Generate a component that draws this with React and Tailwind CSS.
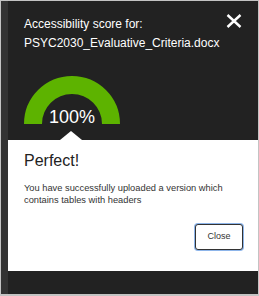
export default function App() {
  return (
    <div className="w-[259px] h-[296px] bg-[#c3c3c3] pt-[1px] pl-[1px] pr-[1px] pb-[2px] font-['Liberation_Sans',Arial,sans-serif]">
      <div className="flex h-full">
        <div className="w-[7px] bg-[#333333]" />
        <div className="flex-1 flex flex-col bg-[#222222]">
          <div className="flex items-start pt-[14px] pl-[16px] pr-[16px]">
            <div className="flex-1 text-white text-[12px] leading-[19px]">
              <div>Accessibility score for:</div>
              <div>PSYC2030_Evaluative_Criteria.docx</div>
            </div>
            <button className="mt-[-1px] block" aria-label="Close">
              <svg width="16" height="14" viewBox="0 0 16 14">
                <path d="M1.5 1 L14.5 13 M14.5 1 L1.5 13" stroke="white" strokeWidth="2.4" fill="none" />
              </svg>
            </button>
          </div>
          <div className="relative ml-[14px] mt-[21px] w-[100px] h-[50px]">
            <svg width="100" height="50" viewBox="0 0 100 50" className="block">
              <path d="M11 50 A39 39 0 0 1 89 50" stroke="#5db300" strokeWidth="18" fill="none" />
            </svg>
            <div className="absolute left-0 top-[34px] w-full text-center text-white text-[18px] leading-[18px]">100%</div>
          </div>
          <div className="relative mt-[16px] bg-white pt-[11px] pl-[16px] pr-[15px] pb-[21px]">
            <svg width="22" height="9" viewBox="0 0 22 9" className="absolute left-[52px] top-[-9px]">
              <polygon points="0,9 11,0 22,9" fill="white" />
            </svg>
            <div className="text-[16px] leading-[20px] text-[#222222]">Perfect!</div>
            <div className="mt-[11px] text-[9.3px] leading-[12px] text-[#333333] pr-[1px]">
              You have successfully uploaded a version which contains tables with headers
            </div>
            <div className="flex justify-end mt-[18px]">
              <button className="w-[48px] h-[26px] border border-[#333333] rounded-[3px] ring-1 ring-[#8db5ea] text-[9px] text-[#333333] bg-white">
                Close
              </button>
            </div>
          </div>
          <div className="flex-1" />
        </div>
      </div>
    </div>
  );
}
